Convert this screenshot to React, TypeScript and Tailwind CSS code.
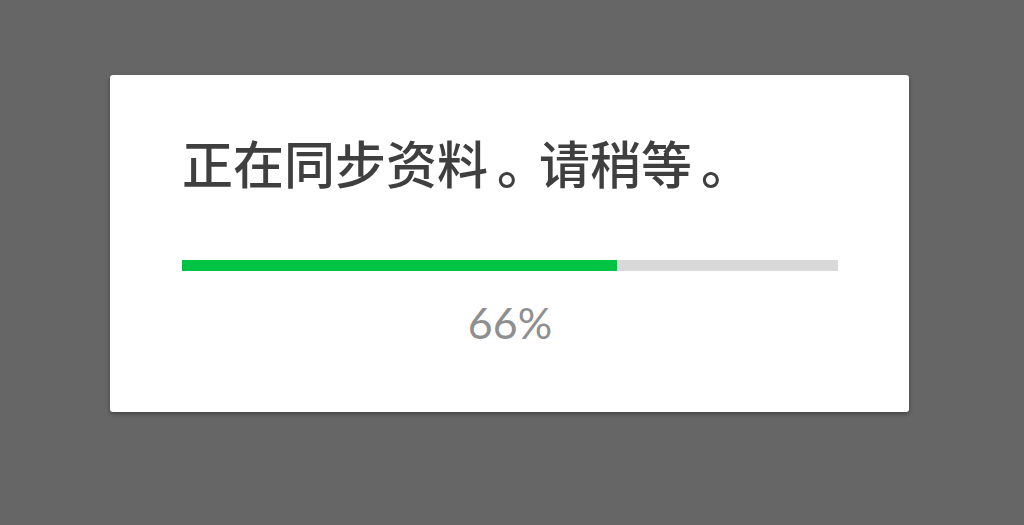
import React from "react";

const Stop = () => <span className="ml-[9px] tracking-[-9px]">。</span>;

const SyncDialog = ({ progress }: { progress: number }) => {
  return (
    <div className="w-[799px] h-[337px] bg-white rounded-[3px] shadow-[0_2px_4px_rgba(0,0,0,0.35)] px-[72px] pt-[62px]">
      <h1
        className="text-[51px] leading-none font-medium text-[#3f3f3f] whitespace-nowrap"
        style={{ fontFamily: '"Noto Sans CJK SC", "Noto Sans", sans-serif' }}
      >
        正在同步资料<Stop />请稍等<Stop />
      </h1>
      <div className="mt-[72px] h-[11px] w-[656px] bg-[#d9d9d9]">
        <div className="h-full bg-[#00c244]" style={{ width: `${progress}%` }} />
      </div>
      <div
        className="mt-[30px] w-[656px] text-center text-[43px] leading-none font-normal text-[#8f8f8f]"
        style={{ fontFamily: 'Lato, "Open Sans", sans-serif' }}
      >
        {Math.round(progress)}%
      </div>
    </div>
  );
};

export default function App() {
  return (
    <div className="w-[1024px] h-[525px] bg-[#666666] pl-[110px] pt-[75px] overflow-hidden">
      <SyncDialog progress={66.3} />
    </div>
  );
}
